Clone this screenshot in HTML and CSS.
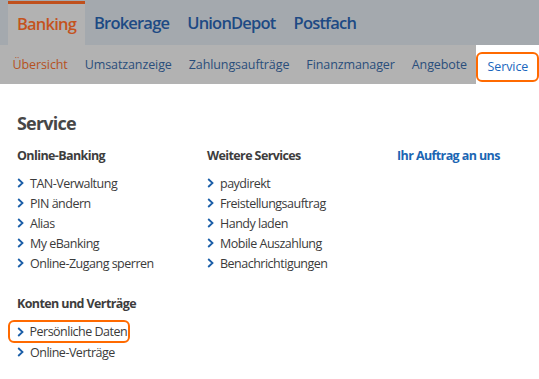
FILE: index.html
```html
<!DOCTYPE html>
<html>
	<head>
		<meta charset="UTF-8">
		<title>Service</title>
		<link rel="stylesheet" href="styles.css">
	</head>
	<body>
		<ul class="mainNav">
			<li class="active"><a href="javascript:;">Banking</a></li>
			<li><a href="javascript:;">Brokerage</a></li>
			<li><a href="javascript:;">UnionDepot</a></li>
			<li><a href="javascript:;">Postfach</a></li>
		</ul>
		<ul class="subNav">
			<li class="active"><a href="javascript:;">Übersicht</a></li>
			<li><a href="javascript:;">Umsatzanzeige</a></li>
			<li><a href="javascript:;">Zahlungsaufträge</a></li>
			<li><a href="javascript:;">Finanzmanager</a></li>
			<li><a href="javascript:;">Angebote</a></li>
			<li class="current"><a href="javascript:;">Service</a></li>
		</ul>
		<div class="content">
			<h1>Service</h1>
			<div class="cols">
				<div class="col">
					<h2>Online-Banking</h2>
					<ul class="links">
						<li><a href="javascript:;"><svg viewBox="0 0 7 10"><polyline points="1.2,1 5.5,5 1.2,9"/></svg>TAN-Verwaltung</a></li>
						<li><a href="javascript:;"><svg viewBox="0 0 7 10"><polyline points="1.2,1 5.5,5 1.2,9"/></svg>PIN ändern</a></li>
						<li><a href="javascript:;"><svg viewBox="0 0 7 10"><polyline points="1.2,1 5.5,5 1.2,9"/></svg>Alias</a></li>
						<li><a href="javascript:;"><svg viewBox="0 0 7 10"><polyline points="1.2,1 5.5,5 1.2,9"/></svg>My eBanking</a></li>
						<li><a href="javascript:;"><svg viewBox="0 0 7 10"><polyline points="1.2,1 5.5,5 1.2,9"/></svg>Online-Zugang sperren</a></li>
					</ul>
					<h2 class="second">Konten und Verträge</h2>
					<ul class="links">
						<li class="marked"><a href="javascript:;"><svg viewBox="0 0 7 10"><polyline points="1.2,1 5.5,5 1.2,9"/></svg>Persönliche Daten</a></li>
						<li><a href="javascript:;"><svg viewBox="0 0 7 10"><polyline points="1.2,1 5.5,5 1.2,9"/></svg>Online-Verträge</a></li>
					</ul>
				</div>
				<div class="col">
					<h2>Weitere Services</h2>
					<ul class="links">
						<li><a href="javascript:;"><svg viewBox="0 0 7 10"><polyline points="1.2,1 5.5,5 1.2,9"/></svg>paydirekt</a></li>
						<li><a href="javascript:;"><svg viewBox="0 0 7 10"><polyline points="1.2,1 5.5,5 1.2,9"/></svg>Freistellungsauftrag</a></li>
						<li><a href="javascript:;"><svg viewBox="0 0 7 10"><polyline points="1.2,1 5.5,5 1.2,9"/></svg>Handy laden</a></li>
						<li><a href="javascript:;"><svg viewBox="0 0 7 10"><polyline points="1.2,1 5.5,5 1.2,9"/></svg>Mobile Auszahlung</a></li>
						<li><a href="javascript:;"><svg viewBox="0 0 7 10"><polyline points="1.2,1 5.5,5 1.2,9"/></svg>Benachrichtigungen</a></li>
					</ul>
				</div>
				<div class="col last">
					<h2 class="blue">Ihr Auftrag an uns</h2>
				</div>
			</div>
		</div>
	</body>
</html>
```

FILE: styles.css
```css
*{
	margin: 0;
	padding: 0;
}
body{
	font-family: "Open Sans", "Noto Sans", sans-serif;
	background-color: #fff;
	width: 539px;
}
a{
	text-decoration: none;
}
ul{
	list-style: none;
}
.mainNav{
	display: flex;
	height: 44px;
	padding: 1px 0 0 8px;
	background-color: #a4a9ae;
}
.mainNav li a{
	display: block;
	height: 44px;
	line-height: 44px;
	padding: 0 9px;
	font-size: 16.5px;
	font-weight: 600;
	letter-spacing: -0.8px;
	color: #1d4a84;
}
.mainNav li.active a{
	height: 41px;
	line-height: 40px;
	border-top: 3px solid #c0501c;
	background-color: #b2b2b2;
	color: #c4531e;
}
.subNav{
	display: flex;
	height: 39px;
	padding-left: 4px;
	background-color: #b2b2b2;
}
.subNav li a{
	display: block;
	line-height: 39px;
	padding: 0 8.5px;
	font-size: 12.5px;
	letter-spacing: -0.1px;
	color: #2a4e7b;
}
.subNav li.active a{
	color: #b5511f;
}
.subNav li.current{
	flex: 1;
	background-color: #fff;
	padding: 7px 2px 1px 0;
}
.subNav li.current a{
	line-height: 26px;
	padding: 0 9px 0 10px;
	border: 2.5px solid #ff6a00;
	border-radius: 6px;
	color: #1a67bd;
	width: max-content;
}
.content{
	padding: 27px 17px 0;
}
.content h1{
	font-size: 18px;
	font-weight: 700;
	color: #474747;
	letter-spacing: -0.8px;
	line-height: 24px;
}
.cols{
	display: flex;
	margin-top: 12px;
}
.col{
	width: 190px;
	flex-shrink: 0;
}
.col.last{
	width: auto;
	flex: 1;
}
.col h2{
	font-size: 12.5px;
	font-weight: 700;
	color: #3d3d3d;
	letter-spacing: -0.6px;
	line-height: 18px;
}
.col h2.blue{
	color: #1b66b3;
}
.col h2.second{
	margin-top: 22px;
}
.links{
	margin-top: 8px;
}
.links li{
	height: 20px;
}
.links li a{
	display: flex;
	align-items: center;
	height: 20px;
	font-size: 12.5px;
	letter-spacing: -0.5px;
	color: #3b3b3b;
	white-space: nowrap;
}
.links svg{
	width: 7px;
	height: 10px;
	margin-right: 6px;
	fill: none;
	stroke: #1a5ea8;
	stroke-width: 1.8;
}
.links li.marked{
	height: 24px;
	margin: -1px 0 -2px -9px;
}
.links li.marked a{
	width: 111px;
	height: 19px;
	padding-left: 6.5px;
	border: 2.5px solid #ff6a00;
	border-radius: 6px;
}
```
